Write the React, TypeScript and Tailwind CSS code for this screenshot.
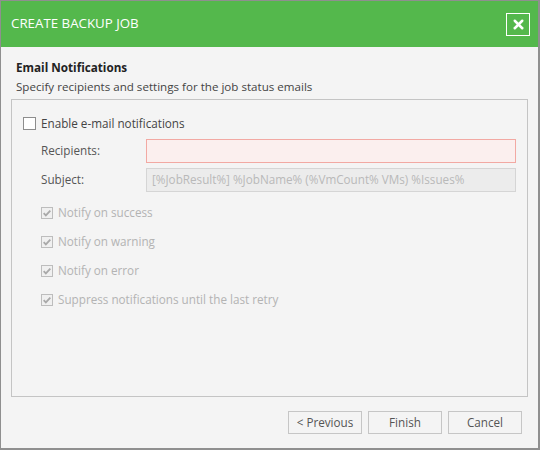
import { X } from "lucide-react";

const notifyOptions = [
  "Notify on success",
  "Notify on warning",
  "Notify on error",
  "Suppress notifications until the last retry",
];

function CheckMark() {
  return (
    <svg viewBox="0 0 12 12" className="h-[10px] w-[10px]">
      <path d="M2 6.2 L4.6 8.8 L10 3.2" fill="none" stroke="#a9a9a9" strokeWidth="2.2" />
    </svg>
  );
}

function Button({ children }: { children: React.ReactNode }) {
  return (
    <button className="flex h-[23px] w-[74px] items-center justify-center border border-[#c6c6c6] bg-[#f4f4f4] text-[11.7px] text-[#555]">
      {children}
    </button>
  );
}

export default function App() {
  return (
    <div
      className="flex h-[450px] w-[540px] flex-col border-t border-l border-r-2 border-b-2 border-[#8f8f8f] bg-[#f4f4f4]"
      style={{ fontFamily: '"Open Sans", "Noto Sans", sans-serif' }}
    >
      <div className="flex h-[46px] shrink-0 items-center justify-between bg-[#54b84c] pl-[10px] pr-[8px]">
        <span className="text-[13.3px] text-white">CREATE BACKUP JOB</span>
        <button className="flex h-[23px] w-[24px] items-center justify-center border border-white">
          <X className="h-[15px] w-[15px] text-white" strokeWidth={4} />
        </button>
      </div>

      <div className="px-[15px] pt-[11px]">
        <div className="text-[11.7px] font-bold leading-[18px] text-[#222]">Email Notifications</div>
        <div className="mt-[2px] text-[11.6px] leading-[18px] text-[#444]">
          Specify recipients and settings for the job status emails
        </div>
      </div>

      <div className="mx-[10px] mt-[3px] flex h-[298px] flex-col border border-[#c4c4c4] px-[11px] pt-[15px]">
        <label className="flex items-center gap-[5px] text-[11.7px] text-[#444]">
          <span className="h-[13px] w-[13px] border border-[#8d8d8d] bg-white" />
          Enable e-mail notifications
        </label>

        <div className="ml-[18px] mt-[6px] flex flex-col gap-[5px]">
          <div className="flex items-center">
            <span className="w-[105px] text-[11.7px] text-[#555]">Recipients:</span>
            <div className="h-[24px] flex-1 border border-[#f2a9a3] bg-[#fbefee]" />
          </div>
          <div className="flex items-center">
            <span className="w-[105px] text-[11.7px] text-[#555]">Subject:</span>
            <div className="flex h-[24px] flex-1 items-center border border-[#d5d5d5] bg-[#ececec] px-[5px] text-[11.7px] text-[#b9b9b9]">
              [%JobResult%] %JobName% (%VmCount% VMs) %Issues%
            </div>
          </div>
        </div>

        <div className="ml-[18px] mt-[15px] flex flex-col gap-[17px]">
          {notifyOptions.map((option) => (
            <label key={option} className="flex h-[12px] items-center gap-[5px] text-[11.7px] text-[#b3b3b3]">
              <span className="flex h-[12px] w-[12px] items-center justify-center border border-[#bdbdbd] bg-[#f0f0f0]">
                <CheckMark />
              </span>
              {option}
            </label>
          ))}
        </div>
      </div>

      <div className="mt-[14px] flex justify-end gap-[6px] pr-[16px]">
        <Button>&lt; Previous</Button>
        <Button>Finish</Button>
        <Button>Cancel</Button>
      </div>
    </div>
  );
}
